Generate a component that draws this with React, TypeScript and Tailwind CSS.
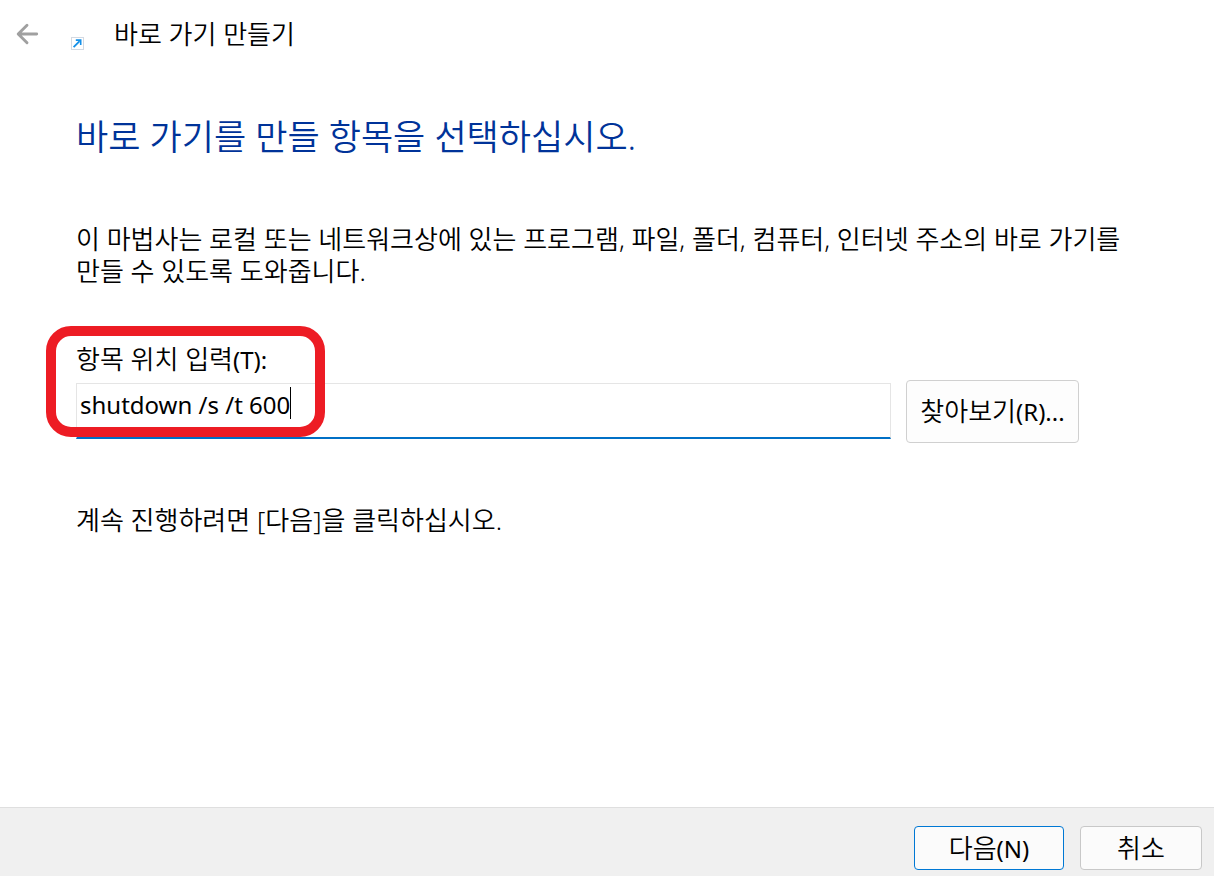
import React, { useState } from "react";

const bodyFont = "font-['Noto_Sans','Noto_Sans_CJK_KR',sans-serif]";

function Key({ children }: { children: React.ReactNode }) {
  return <span className="text-2xl font-normal">{children}</span>;
}

export default function App() {
  const [path, setPath] = useState("shutdown /s /t 600");
  return (
    <div className={`flex min-h-screen flex-col bg-white text-[26px] font-[350] break-keep text-black ${bodyFont}`}>
      <header className="flex h-[68px] items-center px-4">
        <button type="button" aria-label="뒤로" className="flex h-6 w-6 items-center justify-center">
          <svg viewBox="0 0 24 24" className="h-6 w-6" fill="none" stroke="#a0a0a0" strokeWidth="2.9" strokeLinecap="round" strokeLinejoin="round">
            <path d="M20.700 12H2.500M11 3.200L2.200 12l8.800 8.800" />
          </svg>
        </button>
        <svg viewBox="0 0 13 13" className="ml-[31px] mt-[18px] h-[13px] w-[13px]">
          <rect x="0.500" y="0.500" width="12" height="12" fill="#fff" stroke="#d3d9e2" />
          <path d="M2.600 10.200L8.600 4.200" fill="none" stroke="#1590e8" strokeWidth="1.800" />
          <path d="M4.800 3.100H9.700V8" fill="none" stroke="#1590e8" strokeWidth="1.600" />
        </svg>
        <h1 className="ml-[30px] font-[350]">바로 가기 만들기</h1>
      </header>
      <main className="flex flex-1 flex-col pl-[76px] pr-16 pt-11">
        <h2 className="text-[35px] leading-[50px] font-[350] text-[#003399]">바로 가기를 만들 항목을 선택하십시오.</h2>
        <p className="mt-[61px] leading-8">
          이 마법사는 로컬 또는 네트워크상에 있는 프로그램, 파일, 폴더, 컴퓨터, 인터넷 주소의 바로 가기를 만들 수 있도록 도와줍니다.
        </p>
        <div className="relative mt-14 mr-[71px] flex items-end gap-[15px]">
          <div className="relative flex min-w-0 flex-1 flex-col pb-1">
            <label htmlFor="location" className="leading-8">항목 위치 입력<Key>(T):</Key></label>
            <input
              id="location"
              value={path}
              onChange={(e) => setPath(e.target.value)}
              className="mt-[7px] h-14 border border-b-2 border-[#e5e5e5] border-b-[#0070c6] px-[3px] pb-3 text-2xl font-normal outline-none"
            />
            <span aria-hidden="true" className="absolute bottom-6 left-[214px] h-8 w-px bg-black" />
          </div>
          <button type="button" className="h-[63px] w-[173px] rounded border border-[#d0d0d0] bg-[#fdfdfd]">
            찾아보기<Key>(R)...</Key>
          </button>
          <div aria-hidden="true" className="pointer-events-none absolute -left-[30px] bottom-[6px] h-[111px] w-[279px] rounded-[25px] border-10 border-[#ed1c24]" />
        </div>
        <p className="mt-[61px] leading-8">계속 진행하려면 [다음]을 클릭하십시오.</p>
      </main>
      <footer className="flex h-[69px] justify-end gap-4 border-t border-[#dfdfdf] bg-[#f0f0f0] px-3 pt-[18px]">
        <button type="button" className="h-11 w-[150px] rounded border border-[#0078d4] bg-[#fbfbfb]">다음<Key>(N)</Key></button>
        <button type="button" className="h-11 w-[122px] rounded border border-[#c8c8c8] bg-[#fbfbfb]">취소</button>
      </footer>
    </div>
  );
}
